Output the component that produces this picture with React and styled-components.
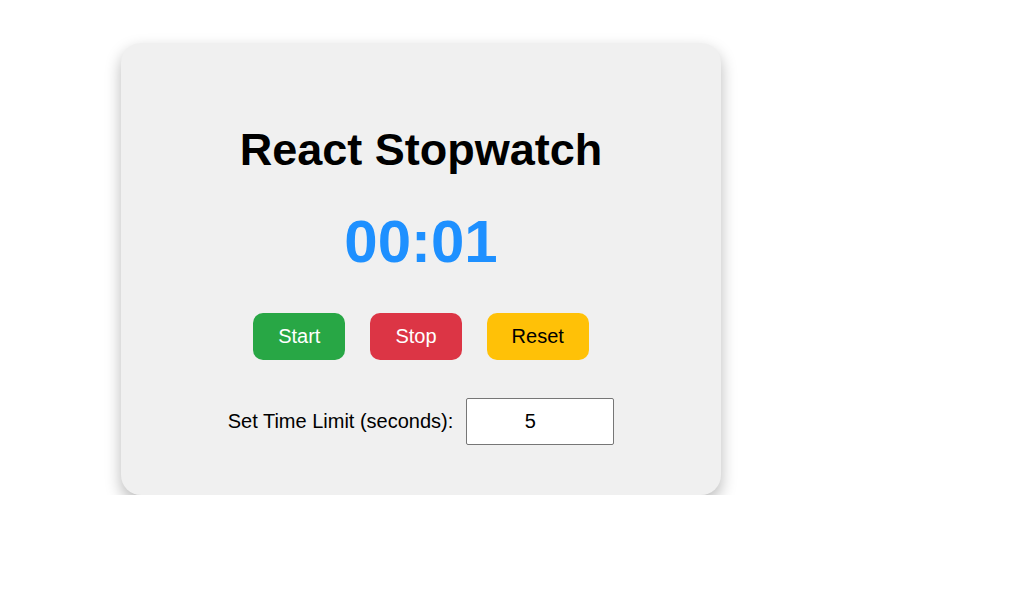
import React, { useState } from 'react';
import styled, { createGlobalStyle } from 'styled-components';

const GlobalStyle = createGlobalStyle`
  body {
    margin: 0;
    background: #ffffff;
    font-family: "Liberation Sans", Arial, sans-serif;
  }
`

const Page = styled.div`
  padding: 43px 0 0 121px;
`

const Card = styled.div`
  width: 600px;
  height: 452px;
  box-sizing: border-box;
  padding: 81px 0 0;
  background-color: #f0f0f0;
  border-radius: 20px;
  box-shadow: 0 7px 16px rgba(0, 0, 0, 0.28);
  display: flex;
  flex-direction: column;
  align-items: center;
`

const Title = styled.h1`
  margin: 0;
  font-size: 45px;
  font-weight: bold;
  color: #000;
`

const Time = styled.div`
  margin-top: 31px;
  font-size: 60px;
  font-weight: bold;
  color: #1e90ff;
`

const Buttons = styled.div`
  display: flex;
  gap: 25px;
  margin-top: 37px;
`

const Button = styled.button`
  height: 47px;
  font-family: inherit;
  font-size: 20px;
  line-height: 23px;
  padding: 0 25px;
  border: none;
  border-radius: 10px;
  cursor: pointer;
  color: ${props => props.dark ? '#000' : '#fff'};
  background-color: ${props => props.color};
`

const LimitRow = styled.div`
  display: flex;
  align-items: center;
  gap: 13px;
  margin-top: 38px;
`

const Label = styled.label`
  font-size: 20px;
  color: #000;
`

const Input = styled.input`
  width: 148px;
  height: 47px;
  box-sizing: border-box;
  border: 1px solid #767676;
  border-radius: 2px;
  background: #fff;
  font-family: inherit;
  font-size: 20px;
  text-align: center;
  padding: 0 6px 0 1px;
`

function App() {
  const [limit, setLimit] = useState(5);

  return (
    <>
      <GlobalStyle />
      <Page>
        <Card>
          <Title>React Stopwatch</Title>
          <Time>00:01</Time>
          <Buttons>
            <Button color="#28a745">Start</Button>
            <Button color="#dc3545">Stop</Button>
            <Button color="#ffc107" dark>Reset</Button>
          </Buttons>
          <LimitRow>
            <Label>Set Time Limit (seconds):</Label>
            <Input
              type="number"
              value={limit}
              onChange={(ev) => setLimit(ev.target.value)}
            />
          </LimitRow>
        </Card>
      </Page>
    </>
  )
}

export default App;
